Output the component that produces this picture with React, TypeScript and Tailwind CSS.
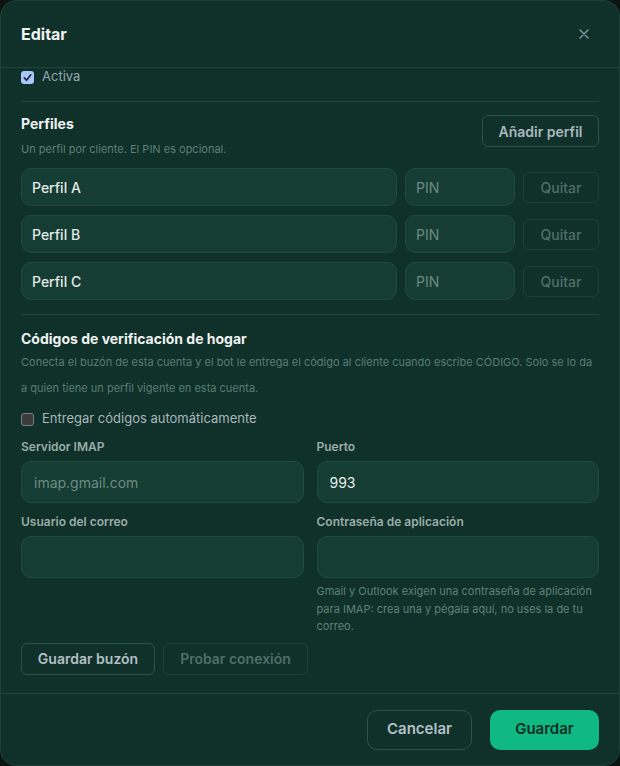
const font = { fontFamily: "Inter, 'Noto Sans', sans-serif" };

const CheckedBox = () => (
  <span className="grid size-[13px] place-items-center rounded-[3px] bg-[#a8c7fa]">
    <svg className="size-[11px]" viewBox="0 0 12 12" fill="none">
      <path d="M2.5 6.5L5 9L9.5 3" stroke="#1f2a37" strokeWidth="1.8" strokeLinecap="round" strokeLinejoin="round" />
    </svg>
  </span>
);

const EmptyBox = () => <span className="block size-[13px] rounded-[3px] border border-[#7c7f80] bg-[#3b3b3b]" />;

const ProfileRow = ({ name }: { name: string }) => (
  <div className="flex h-[38px] items-center gap-2">
    <div className="flex h-full flex-1 items-center rounded-[10px] border border-[#1f4b40] bg-[#153d33] px-[10px] text-[14px] font-medium text-[#e3e9e7]">
      {name}
    </div>
    <div className="flex h-full w-[110px] items-center rounded-[10px] border border-[#1f4b40] bg-[#153d33] px-[10px] text-[14px] text-[#6d8a83]">
      PIN
    </div>
    <button
      className="grid h-[31px] w-[76px] place-items-center rounded-[6px] border border-[#1b4237] text-[14px] font-medium text-[#4f6e67]"
      type="button"
    >
      Quitar
    </button>
  </div>
);

const Field = ({ label, value, placeholder }: { label: string; value?: string; placeholder?: string }) => (
  <div className="flex flex-col">
    <p className="text-[12px] font-semibold leading-4 text-[#9aaca7]">{label}</p>
    <div className="mt-[6px] flex h-[42px] items-center rounded-[10px] border border-[#1f4b40] bg-[#153d33] px-[12px] text-[14px]">
      {value ? <span className="text-[#e6ecea]">{value}</span> : <span className="text-[#6d8a83]">{placeholder}</span>}
    </div>
  </div>
);

export default function App() {
  return (
    <div className="h-[766px] w-[620px] bg-[#0a1512]" style={font}>
      <div className="flex h-full w-full flex-col overflow-hidden rounded-[16px] border border-[#1e3f36] bg-[#10302a]">
        <div className="flex h-[67px] shrink-0 items-center justify-between border-b border-[#1f4439] px-[20px]">
          <h2 className="text-[16px] font-bold text-[#eef2f1]">Editar</h2>
          <svg className="mr-[10px] size-[10px]" viewBox="0 0 10 10" fill="none">
            <path d="M1 1L9 9M9 1L1 9" stroke="#8799a6" strokeWidth="1.4" strokeLinecap="round" />
          </svg>
        </div>

        <div className="flex-1 overflow-hidden px-[20px]">
          <div className="mt-px flex h-[16px] items-center gap-2">
            <CheckedBox />
            <span className="text-[13px] text-[#93a5ae]">Activa</span>
          </div>

          <div className="mt-[16px] border-t border-[#1f4439]" />

          <div className="mt-[12px] flex items-start justify-between">
            <div>
              <p className="text-[14px] font-bold leading-5 text-[#eef2f1]">Perfiles</p>
              <p className="mt-[7px] text-[11px] leading-4 text-[#5e7f77]">Un perfil por cliente. El PIN es opcional.</p>
            </div>
            <button
              className="mt-px h-[32px] w-[117px] rounded-[6px] border border-[#2a5448] text-[14px] font-semibold text-[#a9b7bf]"
              type="button"
            >
              Añadir perfil
            </button>
          </div>

          <div className="mt-[11px] flex flex-col gap-[9px]">
            <ProfileRow name="Perfil A" />
            <ProfileRow name="Perfil B" />
            <ProfileRow name="Perfil C" />
          </div>

          <div className="mt-[14px] border-t border-[#1f4439]" />

          <p className="mt-[14px] text-[14px] font-bold leading-5 text-[#eef2f1]">Códigos de verificación de hogar</p>
          <p className="text-[11px] leading-[26px] text-[#587d73]">
            Conecta el buzón de esta cuenta y el bot le entrega el código al cliente cuando escribe CÓDIGO. Solo se lo da a quien tiene un perfil vigente en esta cuenta.
          </p>

          <div className="mt-[8px] flex h-[20px] items-center gap-2">
            <EmptyBox />
            <span className="text-[13px] text-[#a8b7bc]">Entregar códigos automáticamente</span>
          </div>

          <div className="mt-[10px] grid grid-cols-2 gap-x-[13px] gap-y-[11px]">
            <Field label="Servidor IMAP" placeholder="imap.gmail.com" />
            <Field label="Puerto" value="993" />
            <Field label="Usuario del correo" />
            <div className="flex flex-col">
              <Field label="Contraseña de aplicación" />
              <p className="mt-[5px] text-[11px] leading-[17.5px] text-[#5f8178]">
                Gmail y Outlook exigen una contraseña de aplicación para IMAP: crea una y pégala aquí, no uses la de tu correo.
              </p>
            </div>
          </div>

          <div className="mt-[7px] flex gap-[8px]">
            <button
              className="h-[32px] w-[134px] rounded-[6px] border border-[#2a5448] text-[14px] font-semibold text-[#b3c0c7]"
              type="button"
            >
              Guardar buzón
            </button>
            <button
              className="h-[32px] w-[145px] rounded-[6px] border border-[#1b4237] text-[14px] font-semibold text-[#4f6e67]"
              type="button"
            >
              Probar conexión
            </button>
          </div>
        </div>

        <div className="flex h-[72px] shrink-0 items-center justify-end gap-[18px] border-t border-[#1f4439] px-[20px]">
          <button
            className="h-[40px] w-[105px] rounded-[10px] border border-[#2a5448] text-[15px] font-semibold text-[#b3c0c7]"
            type="button"
          >
            Cancelar
          </button>
          <button
            className="h-[40px] w-[109px] rounded-[10px] bg-[#10b981] text-[15px] font-semibold text-[#0b2e24]"
            type="button"
          >
            Guardar
          </button>
        </div>
      </div>
    </div>
  );
}
